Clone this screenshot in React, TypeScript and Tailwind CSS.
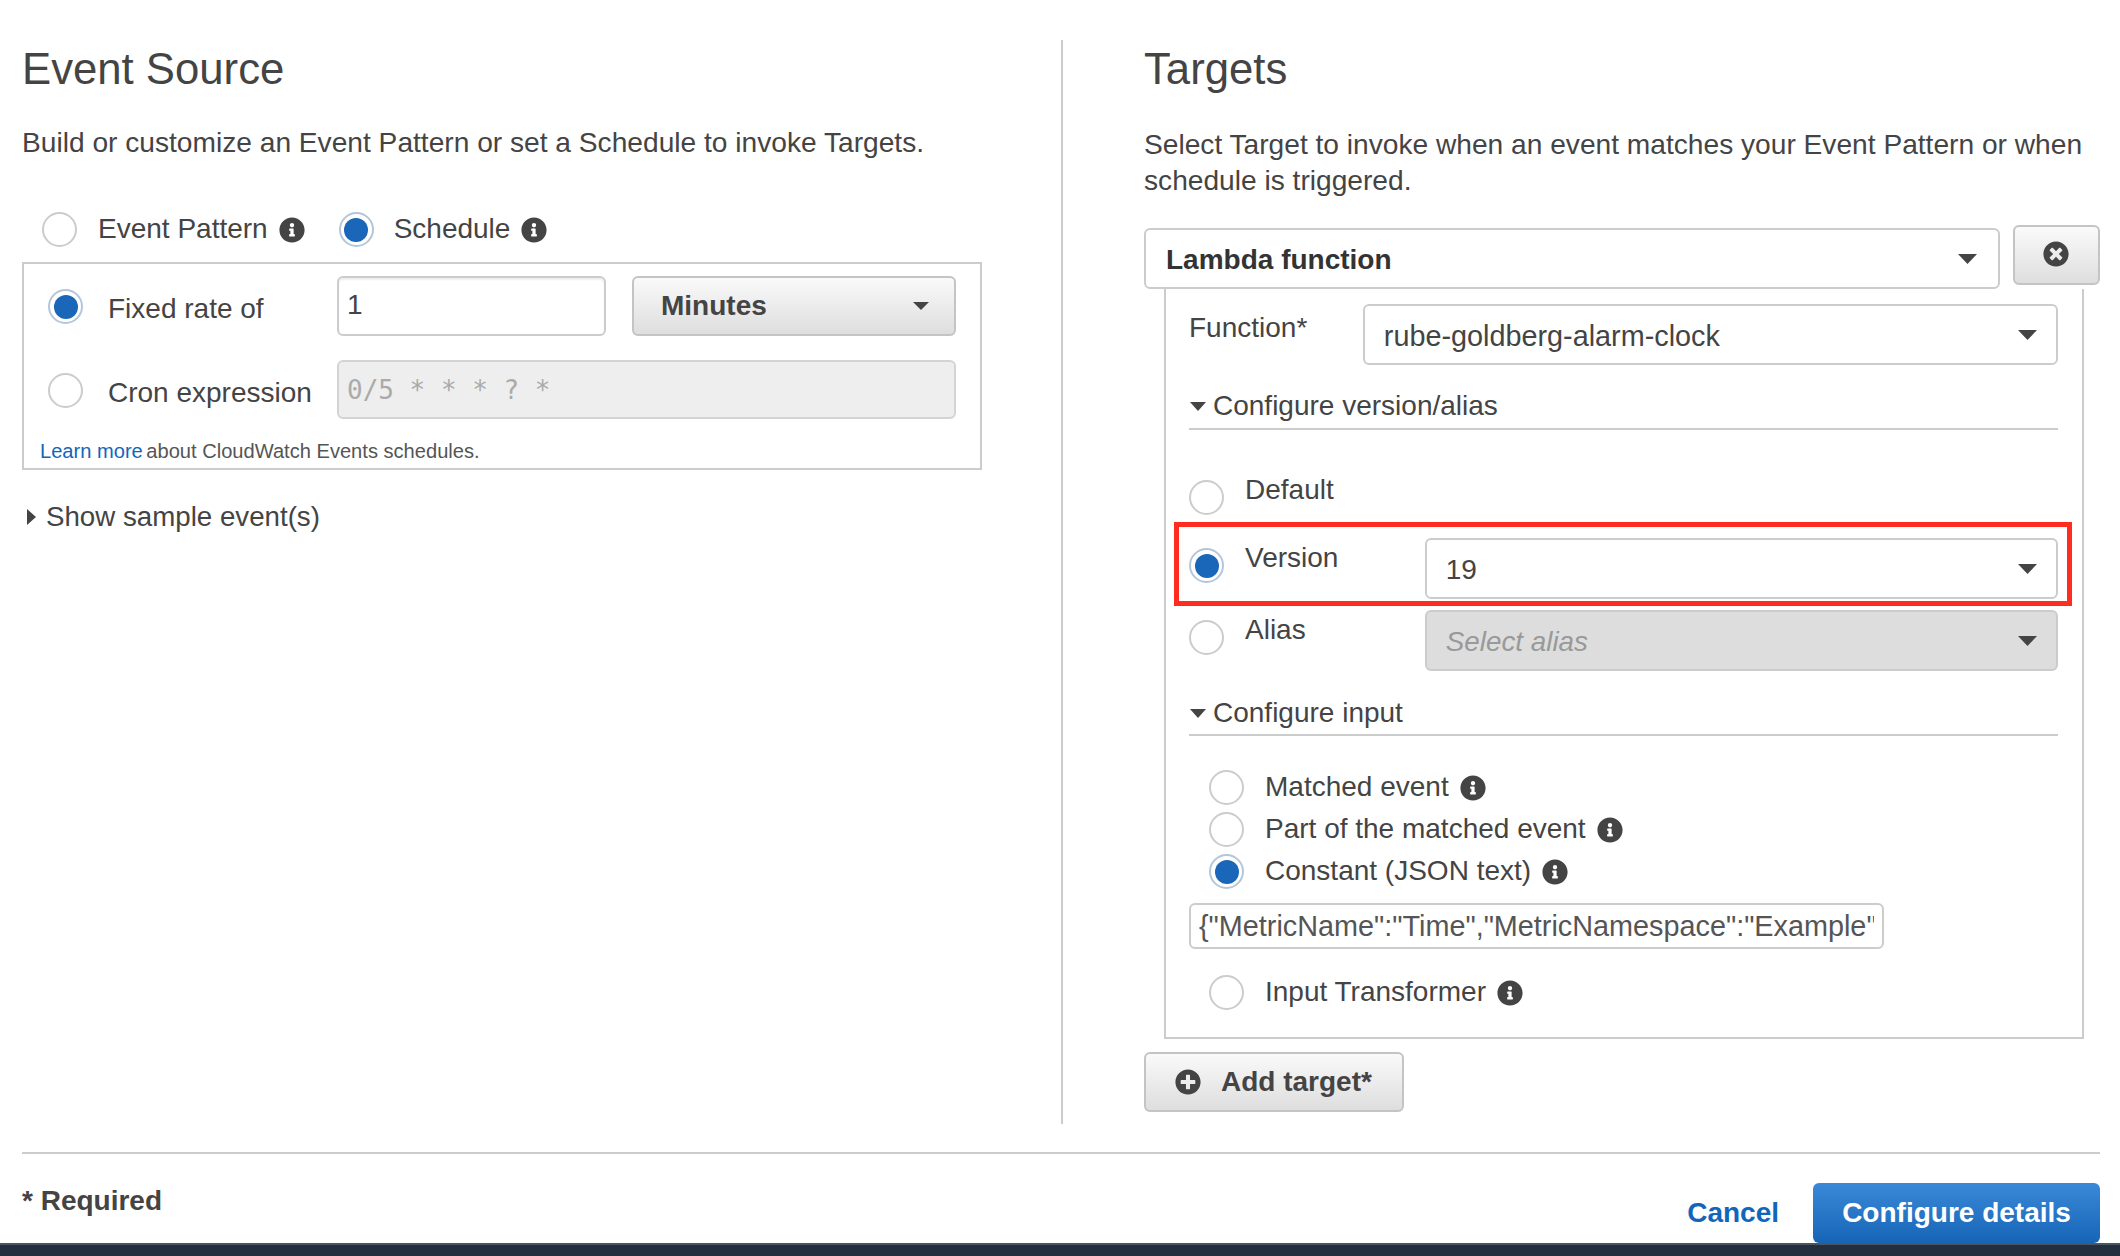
import React from 'react';
import { FaInfoCircle, FaPlusCircle, FaTimesCircle } from 'react-icons/fa';

const Radio: React.FC<{ checked?: boolean; className?: string }> = ({ checked, className = '' }) => (
  <span
    className={`flex h-[35px] w-[35px] shrink-0 items-center justify-center rounded-full border-[2px] bg-white ${
      checked ? 'border-[#b5c6da]' : 'border-[#ccc]'
    } ${className}`}
  >
    {checked && <span className="h-[24px] w-[24px] rounded-full bg-[#1a66b8]" />}
  </span>
);

const Info = () => <FaInfoCircle className="shrink-0 text-[26px] text-[#444]" />;

const Caret: React.FC<{ w?: number; h?: number }> = ({ w = 19, h = 10 }) => (
  <svg width={w} height={h} viewBox="0 0 19 10" preserveAspectRatio="none" className="shrink-0">
    <path d="M0 0h19L9.5 10z" fill="#444" />
  </svg>
);

const Select: React.FC<{ label: string; className?: string; textClass?: string }> = ({ label, className = '', textClass = '' }) => (
  <div className={`flex h-[61px] items-center justify-between rounded-[6px] border-[2px] border-[#ccc] pl-[14px] pr-[19px] ${className}`}>
    <span className={`pt-[2px] leading-[36px] ${textClass}`}>{label}</span>
    <Caret />
  </div>
);

const SectionHead: React.FC<{ label: string; className?: string }> = ({ label, className = '' }) => (
  <div className={`flex items-center gap-[7px] border-b-[2px] border-[#ccc] ${className}`}>
    <svg width="16" height="9" viewBox="0 0 16 9" className="ml-[1px] shrink-0">
      <path d="M0 0h16L8 9z" fill="#444" />
    </svg>
    <span className="text-[28px] leading-[36px]">{label}</span>
  </div>
);

const InputOption: React.FC<{ label: string; checked?: boolean; className?: string }> = ({ label, checked, className = '' }) => (
  <div className={`flex h-[35px] items-center ${className}`}>
    <Radio checked={checked} />
    <span className="ml-[21px] mr-[11px] pb-[2px] text-[28px] leading-[36px]">{label}</span>
    <Info />
  </div>
);

const EventSource = () => (
  <section className="h-full w-[1063px] shrink-0 border-r-[2px] border-[#ccc] pl-[22px]">
    <h2 className="mt-[5px] text-[43.7px] leading-[48px]">Event Source</h2>
    <p className="mt-[32px] text-[28.15px] leading-[36px]">Build or customize an Event Pattern or set a Schedule to invoke Targets.</p>

    <div className="mt-[51px] flex h-[35px] items-center pl-[20px]">
      <Radio />
      <span className="ml-[21px] mr-[11px] pb-[2px] text-[28px]">Event Pattern</span>
      <Info />
      <Radio checked className="ml-[34px]" />
      <span className="ml-[20px] mr-[11px] pb-[2px] text-[28px]">Schedule</span>
      <Info />
    </div>

    <div className="mt-[15px] w-[960px] border-[2px] border-[#ccc] pb-[3px] pl-[24px] pt-[12px]">
      <div className="flex">
        <Radio checked className="mt-[13px]" />
        <span className="ml-[25px] mt-[15px] w-[229px] text-[28px] leading-[36px]">Fixed rate of</span>
        <input
          readOnly
          value="1"
          className="h-[60px] w-[269px] rounded-[6px] border-[2px] border-[#ccc] px-[8px] pb-[2px] text-[28px] text-[#444] shadow-[inset_0_2px_2px_#eee] outline-none"
        />
        <div className="ml-[26px] flex h-[60px] w-[324px] items-center justify-between rounded-[6px] border-[2px] border-[#c4c4c4] bg-gradient-to-b from-[#fafafa] to-[#dedede] pl-[27px] pr-[25px]">
          <span className="text-[28px] font-bold">Minutes</span>
          <Caret w={16} h={8} />
        </div>
      </div>
      <div className="mt-[24px] flex">
        <Radio className="mt-[13px]" />
        <span className="ml-[25px] mt-[15px] w-[229px] text-[28px] leading-[36px]">Cron expression</span>
        <div className="flex h-[59px] w-[619px] items-center rounded-[6px] border-[2px] border-[#d4d4d4] bg-[#eee] px-[8px] pt-[2px] font-['DejaVu_Sans_Mono',monospace] text-[26px] text-[#aaa]">
          0/5 * * * ? *
        </div>
      </div>
      <p className="ml-[-8px] mt-[18px] text-[20.1px] leading-[28px] text-[#555]">
        <span className="mr-[-2px] text-[#1166bb]">Learn more</span> about CloudWatch Events schedules.
      </p>
    </div>

    <div className="mt-[29px] flex items-center pl-[5px]">
      <svg width="9" height="16" viewBox="0 0 9 16" className="shrink-0">
        <path d="M0 0l9 8-9 8z" fill="#444" />
      </svg>
      <span className="ml-[10px] text-[27.7px] leading-[36px]">Show sample event(s)</span>
    </div>
  </section>
);

const Targets = () => (
  <section className="w-[956px]">
    <h2 className="mt-[5px] text-[43.7px] leading-[48px]">Targets</h2>
    <p className="mt-[34px] text-[28.15px] leading-[36px]">
      Select Target to invoke when an event matches your Event Pattern or when schedule is triggered.
    </p>

    <div className="mt-[26px] flex gap-[13px]">
      <Select label="Lambda function" textClass="text-[28px] font-bold text-[#333]" className="mt-[3px] w-[856px] pl-[20px] pr-[21px]" />
      <button className="flex h-[60px] w-[87px] items-center justify-center rounded-[6px] border-[2px] border-[#c4c4c4] bg-gradient-to-b from-[#fafafa] to-[#dedede] pb-[2px] pr-[2px]">
        <FaTimesCircle className="text-[26px] text-[#444]" />
      </button>
    </div>

    <div className="ml-[20px] w-[920px] border-x-[2px] border-b-[2px] border-[#ccc] pb-[27px] pl-[23px] pr-[24px] pt-[15px]">
      <div className="flex">
        <span className="mt-[6px] w-[174px] text-[28px] leading-[36px]">Function*</span>
        <Select label="rube-goldberg-alarm-clock" textClass="text-[28.8px]" className="w-[696px] pl-[19px]" />
      </div>

      <SectionHead label="Configure version/alias" className="mt-[23px] pb-[4px]" />

      <div className="mt-[42px] flex">
        <Radio className="mt-[8px]" />
        <span className="ml-[21px] text-[28px] leading-[36px]">Default</span>
      </div>

      <div className="relative mt-[23px] flex">
        <div className="absolute bottom-[-7px] left-[-15px] right-[-14px] top-[-16px] border-[5px] border-[#ff2d20]" />
        <Radio checked className="mt-[10px]" />
        <span className="ml-[21px] mt-[2px] w-[180px] text-[28px] leading-[36px]">Version</span>
        <Select label="19" textClass="text-[28px]" className="relative w-[634px] pl-[19px]" />
      </div>

      <div className="mt-[11px] flex">
        <Radio className="mt-[10px]" />
        <span className="ml-[21px] mt-[2px] w-[180px] text-[28px] leading-[36px]">Alias</span>
        <Select label="Select alias" textClass="text-[27.8px] italic text-[#999]" className="w-[634px] bg-[#ddd] pl-[19px]" />
      </div>

      <SectionHead label="Configure input" className="mt-[24px] pb-[3px]" />

      <div className="mt-[34px] flex flex-col gap-[7px] pl-[20px]">
        <InputOption label="Matched event" />
        <InputOption label="Part of the matched event" />
        <InputOption label="Constant (JSON text)" checked />
      </div>

      <input
        readOnly
        value={'{"MetricName":"Time","MetricNamespace":"Example"'}
        className="mt-[14px] block h-[46px] w-[695px] rounded-[6px] border-[2px] border-[#ccc] px-[8px] text-[28.8px] text-[#555] outline-none"
      />

      <InputOption label="Input Transformer" className="ml-[20px] mt-[26px]" />
    </div>

    <button className="mt-[13px] flex h-[60px] w-[260px] items-center rounded-[6px] border-[2px] border-[#c4c4c4] bg-gradient-to-b from-[#fafafa] to-[#dedede] pl-[29px]">
      <FaPlusCircle className="shrink-0 text-[26px] text-[#444]" />
      <span className="ml-[20px] text-[28px] font-bold">Add target*</span>
    </button>
  </section>
);

export default function App() {
  return (
    <div className="flex h-[1256px] w-[2120px] flex-col overflow-hidden bg-white font-['Liberation_Sans',Arial,sans-serif] text-[#444]">
      <main className="mt-[40px] flex h-[1084px] gap-[81px]">
        <EventSource />
        <Targets />
      </main>

      <div className="ml-[22px] mr-[20px] mt-[28px] h-[2px] bg-[#ccc]" />

      <footer className="flex flex-1 items-start justify-between pl-[22px] pr-[20px]">
        <span className="mt-[29px] text-[28px] font-bold leading-[36px]">* Required</span>
        <div className="mt-[29px] flex items-center gap-[34px]">
          <a className="text-[28px] font-bold text-[#1166bb]">Cancel</a>
          <button className="h-[60px] w-[287px] rounded-[6px] bg-gradient-to-b from-[#3a88d8] to-[#1565b6] text-[28px] font-bold text-white">
            Configure details
          </button>
        </div>
      </footer>

      <div className="h-[13px] border-t-[2px] border-[#4b5563] bg-[#232f3e]" />
    </div>
  );
}
